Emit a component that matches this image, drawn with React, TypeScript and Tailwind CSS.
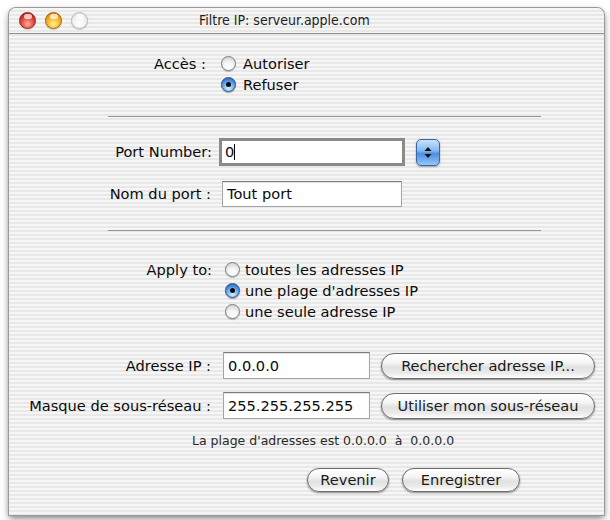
import React from "react";

const body = "font-['DejaVu_Sans',sans-serif] text-[14.6px] text-[#0a0a0a]";

function Radio({ checked, label, gap = "ml-[7px]" }: { checked?: boolean; label: string; gap?: string }) {
  return (
    <div className="flex items-center h-[21px]">
      {checked ? (
        <span className="flex items-center justify-center w-[15px] h-[15px] rounded-full border border-[#2d4f8a] bg-[radial-gradient(circle_at_50%_78%,#d6f3ff_0%,#78b8f0_40%,#3a78cf_75%,#2a5fb0_100%)] shadow-[0_1px_1px_rgba(0,0,0,0.35)]">
          <span className="w-[5px] h-[5px] rounded-full bg-[#0d0d0d]" />
        </span>
      ) : (
        <span className="w-[15px] h-[15px] rounded-full border border-[#7e7e7e] bg-[radial-gradient(circle_at_50%_80%,#ffffff_0%,#f3f3f3_45%,#c6c6c6_100%)] shadow-[0_1px_1px_rgba(0,0,0,0.25)]" />
      )}
      <span className={gap}>{label}</span>
    </div>
  );
}

function Button({ label, w, h = "h-[24px]" }: { label: string; w: string; h?: string }) {
  return (
    <div
      className={`${w} ${h} flex items-center justify-center rounded-full border border-[#6c6c6c] bg-[linear-gradient(to_bottom,#ffffff_0%,#f6f6f6_35%,#e1e1e1_55%,#ebebeb_80%,#ffffff_100%)] shadow-[0_1px_2px_rgba(0,0,0,0.45)] text-[#1a1a1a]`}
    >
      {label}
    </div>
  );
}

function Field({ value, w, h, focused }: { value: string; w: string; h: string; focused?: boolean }) {
  return (
    <div
      className={`${w} ${h} flex items-center bg-white ${
        focused
          ? "border-[3px] border-[#8a8a8a] pl-[3px]"
          : "border border-[#a5a5a5] border-t-[#7c7c7c] pl-[4px] shadow-[inset_0_1px_1px_rgba(0,0,0,0.12)]"
      }`}
    >
      <span>{value}</span>
      {focused && <span className="w-px h-[16px] bg-black" />}
    </div>
  );
}

function Light({ kind }: { kind: "red" | "yellow" | "grey" }) {
  const cls =
    kind === "red"
      ? "border-[#8e2a22] bg-[radial-gradient(circle_at_50%_72%,#ffb3a6_0%,#ea5a4d_38%,#c42a1f_72%,#8f1a12_100%)]"
      : kind === "yellow"
      ? "border-[#a0620a] bg-[radial-gradient(circle_at_50%_72%,#fff2a0_0%,#f7c236_38%,#e89512_72%,#b86a05_100%)]"
      : "border-[#b8b8b8] bg-[radial-gradient(circle_at_50%_72%,#ffffff_0%,#f1f1f1_50%,#d8d8d8_100%)]";
  return (
    <span className={`relative w-[17px] h-[17px] rounded-full border ${cls} shadow-[0_1px_1px_rgba(0,0,0,0.2)]`}>
      <span className="absolute left-[4px] top-[1px] w-[8px] h-[5px] rounded-full bg-[rgba(255,255,255,0.7)]" />
    </span>
  );
}

function Stepper() {
  return (
    <div className="w-[24px] h-[27px] rounded-[5px] border border-[#3566a8] bg-[linear-gradient(to_bottom,#c8e2fb_0%,#86b9f0_42%,#4d8de0_55%,#92c8f7_100%)] shadow-[0_1px_2px_rgba(0,0,0,0.35)] flex items-center justify-center">
      <svg width="8" height="13" viewBox="0 0 8 13">
        <polygon points="4,1 7.5,5 0.5,5" fill="#111" />
        <polygon points="4,12 7.5,8 0.5,8" fill="#111" />
      </svg>
    </div>
  );
}

export default function App() {
  return (
    <div className="w-[610px] h-[520px] bg-white overflow-hidden pt-[8px] pl-[9px]">
      <div
        className={`w-[595px] h-[507px] rounded-t-[7px] overflow-hidden flex flex-col shadow-[0_0_0_1px_#9a9a9a,0_3px_7px_rgba(0,0,0,0.55)] bg-[repeating-linear-gradient(to_bottom,#f6f6f6_0px,#f6f6f6_2px,#e8e8e8_2px,#e8e8e8_4px)] ${body}`}
      >
        {/* title bar */}
        <div className="h-[26px] shrink-0 flex items-center border-b border-[#8e8e8e] pl-[10px]">
          <div className="flex items-center gap-[9px]">
            <Light kind="red" />
            <Light kind="yellow" />
            <Light kind="grey" />
          </div>
          <span className="ml-[111px] font-['DejaVu_Sans_Condensed','DejaVu_Sans',sans-serif] text-[14px] text-[#1e1e1e]">
            Filtre IP: serveur.apple.com
          </span>
        </div>

        {/* Accès */}
        <div className="flex mt-[19px]">
          <div className="w-[197px] h-[21px] flex items-center justify-end">Accès :</div>
          <div className="ml-[15px] flex flex-col">
            <Radio label="Autoriser" />
            <Radio label="Refuser" checked />
          </div>
        </div>

        <div className="ml-[99px] mt-[21px] w-[433px] h-px bg-[#949494] shrink-0" />

        {/* Port number */}
        <div className="flex items-center mt-[21px] h-[28px]">
          <div className="w-[203px] text-right">Port Number:</div>
          <div className="ml-[7px]">
            <Field value="0" w="w-[186px]" h="h-[28px]" focused />
          </div>
          <div className="ml-[11px]">
            <Stepper />
          </div>
        </div>

        {/* Nom du port */}
        <div className="flex items-center mt-[15px] h-[26px]">
          <div className="w-[202px] text-right">Nom du port :</div>
          <div className="ml-[11px]">
            <Field value="Tout port" w="w-[180px]" h="h-[26px]" />
          </div>
        </div>

        <div className="ml-[99px] mt-[23px] w-[433px] h-px bg-[#949494] shrink-0" />

        {/* Apply to */}
        <div className="flex mt-[28px]">
          <div className="w-[203px] h-[21px] flex items-center justify-end">Apply to:</div>
          <div className="ml-[13px] flex flex-col">
            <Radio label="toutes les adresses IP" gap="ml-[5px]" />
            <Radio label="une plage d'adresses IP" gap="ml-[5px]" checked />
            <Radio label="une seule adresse IP" gap="ml-[5px]" />
          </div>
        </div>

        {/* Adresse IP */}
        <div className="flex items-center mt-[30px] h-[27px]">
          <div className="w-[202px] text-right">Adresse IP :</div>
          <div className="ml-[12px]">
            <Field value="0.0.0.0" w="w-[147px]" h="h-[27px]" />
          </div>
          <div className="ml-[11px]">
            <Button label="Rechercher adresse IP..." w="w-[214px]" h="h-[26px]" />
          </div>
        </div>

        {/* Masque */}
        <div className="flex items-center mt-[13px] h-[27px]">
          <div className="w-[202px] text-right whitespace-nowrap">Masque de sous-réseau :</div>
          <div className="ml-[12px]">
            <Field value="255.255.255.255" w="w-[147px]" h="h-[27px]" />
          </div>
          <div className="ml-[11px]">
            <Button label="Utiliser mon sous-réseau" w="w-[214px]" h="h-[26px]" />
          </div>
        </div>

        {/* summary */}
        <div className="mt-[14px] h-[16px] pl-[183px] text-[12.5px] leading-[16px] text-[#2a2a2a] whitespace-pre">
          La plage d'adresses est 0.0.0.0  à  0.0.0.0
        </div>

        {/* bottom buttons */}
        <div className="flex mt-[19px] pl-[298px] gap-[13px]">
          <Button label="Revenir" w="w-[82px]" />
          <Button label="Enregistrer" w="w-[118px]" />
        </div>
      </div>
    </div>
  );
}
